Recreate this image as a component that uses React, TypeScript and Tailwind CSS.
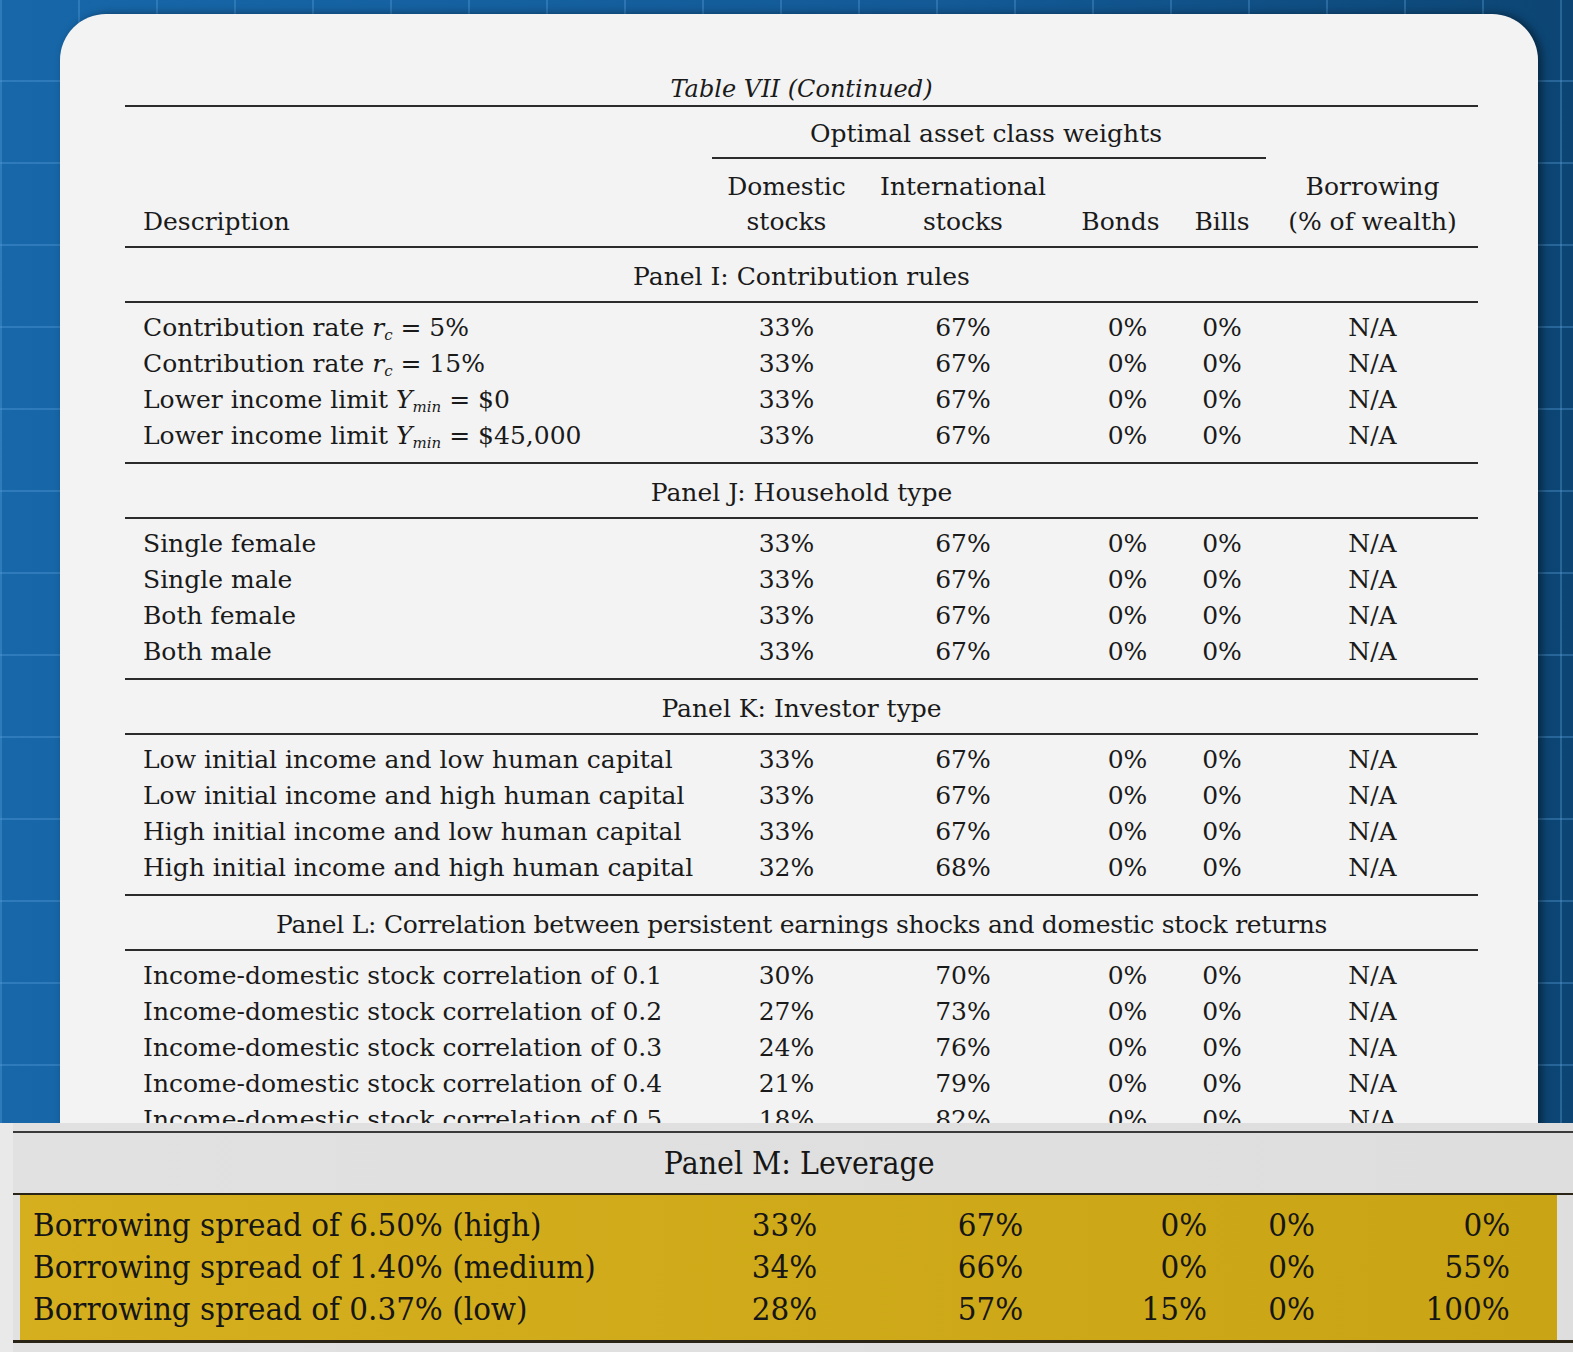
import React from "react";

type Row = {
  label: React.ReactNode;
  dom: string;
  intl: string;
  bonds: string;
  bills: string;
  borrow: string;
};

const rc = (
  <>
    <i>r</i>
    <sub className="text-[15px] italic">c</sub>
  </>
);

const ymin = (
  <>
    <i>Y</i>
    <sub className="text-[15px] italic">min</sub>
  </>
);

const panels: { title: string; tight?: boolean; rows: Row[] }[] = [
  {
    title: "Panel I: Contribution rules",
    rows: [
      { label: <>Contribution rate {rc} = 5%</>, dom: "33%", intl: "67%", bonds: "0%", bills: "0%", borrow: "N/A" },
      { label: <>Contribution rate {rc} = 15%</>, dom: "33%", intl: "67%", bonds: "0%", bills: "0%", borrow: "N/A" },
      { label: <>Lower income limit {ymin} = $0</>, dom: "33%", intl: "67%", bonds: "0%", bills: "0%", borrow: "N/A" },
      { label: <>Lower income limit {ymin} = $45,000</>, dom: "33%", intl: "67%", bonds: "0%", bills: "0%", borrow: "N/A" },
    ],
  },
  {
    title: "Panel J: Household type",
    rows: [
      { label: "Single female", dom: "33%", intl: "67%", bonds: "0%", bills: "0%", borrow: "N/A" },
      { label: "Single male", dom: "33%", intl: "67%", bonds: "0%", bills: "0%", borrow: "N/A" },
      { label: "Both female", dom: "33%", intl: "67%", bonds: "0%", bills: "0%", borrow: "N/A" },
      { label: "Both male", dom: "33%", intl: "67%", bonds: "0%", bills: "0%", borrow: "N/A" },
    ],
  },
  {
    title: "Panel K: Investor type",
    rows: [
      { label: "Low initial income and low human capital", dom: "33%", intl: "67%", bonds: "0%", bills: "0%", borrow: "N/A" },
      { label: "Low initial income and high human capital", dom: "33%", intl: "67%", bonds: "0%", bills: "0%", borrow: "N/A" },
      { label: "High initial income and low human capital", dom: "33%", intl: "67%", bonds: "0%", bills: "0%", borrow: "N/A" },
      { label: "High initial income and high human capital", dom: "32%", intl: "68%", bonds: "0%", bills: "0%", borrow: "N/A" },
    ],
  },
  {
    title: "Panel L: Correlation between persistent earnings shocks and domestic stock returns",
    tight: true,
    rows: [
      { label: "Income-domestic stock correlation of 0.1", dom: "30%", intl: "70%", bonds: "0%", bills: "0%", borrow: "N/A" },
      { label: "Income-domestic stock correlation of 0.2", dom: "27%", intl: "73%", bonds: "0%", bills: "0%", borrow: "N/A" },
      { label: "Income-domestic stock correlation of 0.3", dom: "24%", intl: "76%", bonds: "0%", bills: "0%", borrow: "N/A" },
      { label: "Income-domestic stock correlation of 0.4", dom: "21%", intl: "79%", bonds: "0%", bills: "0%", borrow: "N/A" },
      { label: "Income-domestic stock correlation of 0.5", dom: "18%", intl: "82%", bonds: "0%", bills: "0%", borrow: "N/A" },
    ],
  },
];

const leverage = [
  { label: "Borrowing spread of 6.50% (high)", dom: "33%", intl: "67%", bonds: "0%", bills: "0%", borrow: "0%" },
  { label: "Borrowing spread of 1.40% (medium)", dom: "34%", intl: "66%", bonds: "0%", bills: "0%", borrow: "55%" },
  { label: "Borrowing spread of 0.37% (low)", dom: "28%", intl: "57%", bonds: "15%", bills: "0%", borrow: "100%" },
];

const Rule = () => <div className="h-[2px] bg-[#2b2b2b]" />;

const DataRow = ({ row }: { row: Row }) => (
  <div className="grid h-[36px] grid-cols-[583px_157px_196px_119px_84px_217px] items-center">
    <div className="whitespace-nowrap pl-[18px]">{row.label}</div>
    <div className="text-center">{row.dom}</div>
    <div className="text-center">{row.intl}</div>
    <div className="pl-[14px] text-center">{row.bonds}</div>
    <div className="text-center">{row.bills}</div>
    <div className="text-center">{row.borrow}</div>
  </div>
);

export default function App() {
  return (
    <div className="relative h-[1352px] w-full overflow-hidden bg-[linear-gradient(90deg,#1767a9_0%,#135a97_60%,#0c4573_100%)] font-['DejaVu_Serif','Liberation_Serif',serif] text-[#1a1a1a]">
      {/* grid lines of the backdrop */}
      <div className="absolute inset-0 bg-[linear-gradient(90deg,rgba(90,160,220,0.35)_2px,transparent_2px),linear-gradient(0deg,rgba(90,160,220,0.35)_2px,transparent_2px)] bg-[size:78px_82px]" />

      {/* card */}
      <div className="relative ml-[60px] mt-[14px] h-[1400px] w-[1478px] rounded-t-[46px] bg-[#f3f3f3] pl-[65px] pr-[60px] pt-[60px] text-[25px] shadow-[4px_0_8px_rgba(0,0,0,0.45)]">
        <div className="text-center text-[24px] leading-[30px] italic">Table VII (Continued)</div>
        <div className="mt-[1px]">
          <Rule />
          {/* header */}
          <div className="grid grid-cols-[583px_157px_196px_119px_84px_217px]">
            <div />
            <div className="col-span-4 flex h-[52px] flex-col justify-end">
              <div className="pb-[8px] text-center leading-[30px]">Optimal asset class weights</div>
              <div className="ml-[4px] mr-[-2px] h-[2px] bg-[#2b2b2b]" />
            </div>
            <div />
            <div className="flex h-[87px] items-end pb-[7px] pl-[18px] leading-[35px]">Description</div>
            <div className="flex h-[87px] flex-col items-center justify-center pt-[2px] leading-[35px]">
              <span>Domestic</span>
              <span>stocks</span>
            </div>
            <div className="flex h-[87px] flex-col items-center justify-center pt-[2px] leading-[35px]">
              <span>International</span>
              <span>stocks</span>
            </div>
            <div className="flex h-[87px] items-end justify-center pb-[7px] leading-[35px]">Bonds</div>
            <div className="flex h-[87px] items-end justify-center pb-[7px] leading-[35px]">Bills</div>
            <div className="flex h-[87px] flex-col items-center justify-center pt-[2px] leading-[35px]">
              <span>Borrowing</span>
              <span>(% of wealth)</span>
            </div>
          </div>
          {panels.map((p) => (
            <div key={p.title}>
              <Rule />
              <div
                className={
                  p.tight
                    ? "flex h-[53px] items-center justify-center whitespace-nowrap pt-[4px] tracking-[-0.27px]"
                    : "flex h-[53px] items-center justify-center whitespace-nowrap pt-[4px]"
                }
              >
                {p.title}
              </div>
              <Rule />
              <div className="pb-[9px] pt-[6px]">
                {p.rows.map((r, i) => (
                  <DataRow key={i} row={r} />
                ))}
              </div>
            </div>
          ))}
        </div>
      </div>

      {/* highlighted overlay */}
      <div className="absolute bottom-0 left-0 right-0 h-[229px] bg-[linear-gradient(90deg,#e9e9e9_0px,#e9e9e9_13px,#e1e1e1_13px,#dedede_100%)] pt-[8px] text-[31px] text-[#161616]">
        <div className="ml-[13px] h-[2px] bg-[#3a3a3a]" />
        <div className="flex h-[60px] items-center justify-center pl-[26px]">
          <span className="inline-block scale-x-[0.92]">Panel M: Leverage</span>
        </div>
        <div className="ml-[13px] h-[2px] bg-[#2a2416]" />
        <div className="ml-[20px] w-[1537px] bg-[linear-gradient(90deg,#d5af1e,#c9a414)] pb-[12px] pt-[7px]">
          {leverage.map((r) => (
            <div
              key={r.label}
              className="grid h-[42px] grid-cols-[680px_169px_242px_96px_170px_133px] items-center whitespace-nowrap"
            >
              <div className="pl-[13px]">
                <span className="inline-block origin-left scale-x-[0.95]">{r.label}</span>
              </div>
              <div className="text-center">
                <span className="inline-block scale-x-[0.95]">{r.dom}</span>
              </div>
              <div className="text-center">
                <span className="inline-block scale-x-[0.95]">{r.intl}</span>
              </div>
              <div className="text-right">
                <span className="inline-block origin-right scale-x-[0.95]">{r.bonds}</span>
              </div>
              <div className="text-center">
                <span className="inline-block scale-x-[0.95]">{r.bills}</span>
              </div>
              <div className="text-right">
                <span className="inline-block origin-right scale-x-[0.95]">{r.borrow}</span>
              </div>
            </div>
          ))}
        </div>
        <div className="ml-[13px] h-[3px] bg-[#2a2416]" />
      </div>
    </div>
  );
}
